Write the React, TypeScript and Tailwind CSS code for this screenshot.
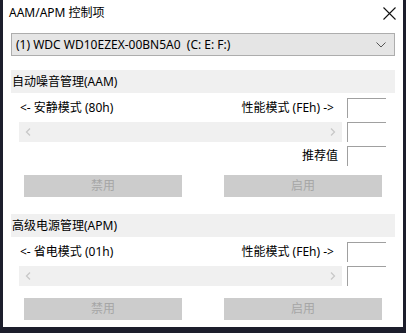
const font = "font-['Noto_Sans','Noto_Sans_CJK_SC',sans-serif]";

const EditBox = () => (
  <div className="w-[39px] h-[20px] border-t border-l border-[#a0a0a0] bg-white" />
);

const ScrollBar = () => (
  <div className="w-[323px] h-[20px] bg-[#f0f0f0] flex items-center justify-between px-[6px]">
    <svg width="6" height="8" viewBox="0 0 6 8">
      <path d="M5 0.5 L1.5 4 L5 7.5" fill="none" stroke="#c8c8c8" strokeWidth="1.3" />
    </svg>
    <svg width="6" height="8" viewBox="0 0 6 8">
      <path d="M1 0.5 L4.5 4 L1 7.5" fill="none" stroke="#c8c8c8" strokeWidth="1.3" />
    </svg>
  </div>
);

const Buttons = () => (
  <div className="flex gap-[42px] pl-[13px]">
    <div className="w-[158px] h-[22px] bg-[#cccccc] flex items-center justify-center text-[#a6a6a6]">禁用</div>
    <div className="w-[158px] h-[22px] bg-[#cccccc] flex items-center justify-center text-[#a6a6a6]">启用</div>
  </div>
);

const Section = ({ title, low, showRec }: { title: string; low: string; showRec: boolean }) => (
  <div className="flex flex-col">
    <div className="h-[23px] bg-[#f0f0f0] flex items-center pl-[1px]">{title}</div>
    <div className="flex flex-col gap-[4px] mt-[5px] pl-[8px]">
      <div className="flex items-center">
        <div className="w-[319px] flex justify-between pl-[1px] pr-[4px]">
          <span>{low}</span>
          <span>性能模式 (FEh) -&gt;</span>
        </div>
        <div className="ml-[9px]"><EditBox /></div>
      </div>
      <div className="flex items-center">
        <ScrollBar />
        <div className="ml-[5px]"><EditBox /></div>
      </div>
      {showRec && (
        <div className="flex items-center justify-end w-[367px]">
          <span className="mr-[9px]">推荐值</span>
          <EditBox />
        </div>
      )}
    </div>
    <div className={showRec ? "mt-[9px]" : "mt-[12px]"}>
      <Buttons />
    </div>
  </div>
);

export default function App() {
  return (
    <div className={`w-[406px] h-[333px] overflow-hidden bg-[#1c1e2c] text-[12px] text-black ${font}`}>
      <div className="ml-[3px] w-[400px] h-[327px] bg-white flex flex-col">
        <div className="h-[25px] flex items-center justify-between pl-[6px] pr-[7px]">
          <span>AAM/APM 控制项</span>
          <svg width="13" height="13" viewBox="0 0 13 13" className="mt-[1px]">
            <path d="M0.5 0.5 L12.5 12.5 M12.5 0.5 L0.5 12.5" stroke="#111" strokeWidth="1.1" />
          </svg>
        </div>
        <div className="px-[8px] flex flex-col">
          <div className="mt-[8px] h-[23px] border border-[#adadad] bg-[#e5e5e5] flex items-center justify-between pl-[4px] pr-[8px]">
            <span className="whitespace-pre">(1) WDC WD10EZEX-00BN5A0  (C: E: F:)</span>
            <svg width="10" height="6" viewBox="0 0 10 6">
              <path d="M0.5 0.5 L5 5 L9.5 0.5" fill="none" stroke="#555" strokeWidth="1" />
            </svg>
          </div>
          <div className="mt-[14px]">
            <Section title="自动噪音管理(AAM)" low="<- 安静模式 (80h)" showRec={true} />
          </div>
          <div className="mt-[17px]">
            <Section title="高级电源管理(APM)" low="<- 省电模式 (01h)" showRec={false} />
          </div>
        </div>
      </div>
    </div>
  );
}
